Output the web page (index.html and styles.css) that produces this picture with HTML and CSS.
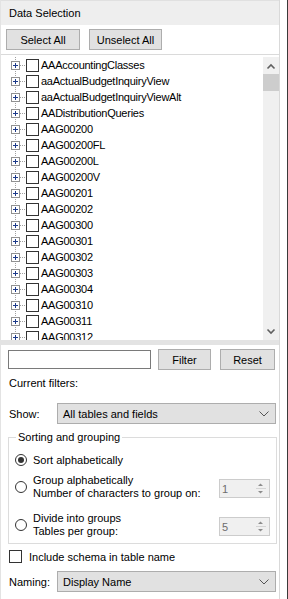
FILE: index.html
```
<!DOCTYPE html>
<html>
<head>
<meta charset="utf-8">
<link rel="stylesheet" href="styles.css">
</head>
<body>
<svg class="defs" width="0" height="0" aria-hidden="true">
  <symbol id="node" viewBox="0 0 38 16">
    <line x1="14.5" y1="0" x2="14.5" y2="16" stroke="#a0a0a0" stroke-dasharray="1 1"/>
    <line x1="19" y1="8.5" x2="25" y2="8.5" stroke="#a0a0a0" stroke-dasharray="1 1"/>
    <rect x="10.5" y="4.5" width="8" height="8" fill="#fff" stroke="#919191"/>
    <path d="M12 8.5h5M14.5 6v5" stroke="#1c3a8a"/>
    <rect x="25.5" y="2.5" width="12" height="12" fill="#fff" stroke="#333"/>
  </symbol>
</svg>
<div class="window">
  <div class="panel">
    <div class="header">Data Selection</div>
    <div class="btnrow">
      <div class="btn sel">Select All</div>
      <div class="btn unsel">Unselect All</div>
    </div>
    <div class="tree">
      <ul class="list">
        <li class="node"><svg class="nico"><use href="#node"/></svg><span>AAAccountingClasses</span></li>
        <li class="node"><svg class="nico"><use href="#node"/></svg><span>aaActualBudgetInquiryView</span></li>
        <li class="node"><svg class="nico"><use href="#node"/></svg><span>aaActualBudgetInquiryViewAlt</span></li>
        <li class="node"><svg class="nico"><use href="#node"/></svg><span>AADistributionQueries</span></li>
        <li class="node"><svg class="nico"><use href="#node"/></svg><span>AAG00200</span></li>
        <li class="node"><svg class="nico"><use href="#node"/></svg><span>AAG00200FL</span></li>
        <li class="node"><svg class="nico"><use href="#node"/></svg><span>AAG00200L</span></li>
        <li class="node"><svg class="nico"><use href="#node"/></svg><span>AAG00200V</span></li>
        <li class="node"><svg class="nico"><use href="#node"/></svg><span>AAG00201</span></li>
        <li class="node"><svg class="nico"><use href="#node"/></svg><span>AAG00202</span></li>
        <li class="node"><svg class="nico"><use href="#node"/></svg><span>AAG00300</span></li>
        <li class="node"><svg class="nico"><use href="#node"/></svg><span>AAG00301</span></li>
        <li class="node"><svg class="nico"><use href="#node"/></svg><span>AAG00302</span></li>
        <li class="node"><svg class="nico"><use href="#node"/></svg><span>AAG00303</span></li>
        <li class="node"><svg class="nico"><use href="#node"/></svg><span>AAG00304</span></li>
        <li class="node"><svg class="nico"><use href="#node"/></svg><span>AAG00310</span></li>
        <li class="node"><svg class="nico"><use href="#node"/></svg><span>AAG00311</span></li>
        <li class="node"><svg class="nico"><use href="#node"/></svg><span>AAG00312</span></li>
      </ul>
      <div class="vscroll">
        <div class="sarrow"><svg width="16" height="17" viewBox="0 0 16 17"><path d="M4.5 11.5L8 8l3.5 3.5" fill="none" stroke="#606060" stroke-width="1.6"/></svg></div>
        <div class="thumb"></div>
        <div class="track"></div>
        <div class="sarrow"><svg width="16" height="17" viewBox="0 0 16 17"><path d="M4.5 6.5L8 10l3.5-3.5" fill="none" stroke="#606060" stroke-width="1.6"/></svg></div>
      </div>
    </div>
    <div class="splitter"></div>
    <div class="options">
      <div class="filter-row">
        <div class="textbox"></div>
        <div class="btn filter">Filter</div>
        <div class="btn reset">Reset</div>
      </div>
      <div class="current">Current filters:</div>
      <div class="field-row show-row">
        <span class="lbl">Show:</span>
        <div class="combo"><span>All tables and fields</span><svg width="10" height="6" viewBox="0 0 10 6"><path d="M0.5 0.5L5 5l4.5-4.5" fill="none" stroke="#555"/></svg></div>
      </div>
      <fieldset class="group">
        <legend>Sorting and grouping</legend>
        <div class="opt opt1">
          <span class="radio checked"></span>
          <div class="otext">Sort alphabetically</div>
        </div>
        <div class="opt opt2">
          <span class="radio"></span>
          <div class="otext">Group alphabetically<br>Number of characters to group on:</div>
          <div class="spin"><span class="val">1</span><span class="spinbtns"><svg width="14" height="16" viewBox="0 0 14 16"><path d="M4 6h5L6.5 3.5z" fill="#8c8c8c"/><path d="M2 8.5h10" stroke="#d4d4d4"/><path d="M4 11h5L6.5 13.5z" fill="#8c8c8c"/></svg></span></div>
        </div>
        <div class="opt opt3">
          <span class="radio"></span>
          <div class="otext">Divide into groups<br>Tables per group:</div>
          <div class="spin"><span class="val">5</span><span class="spinbtns"><svg width="14" height="16" viewBox="0 0 14 16"><path d="M4 6h5L6.5 3.5z" fill="#8c8c8c"/><path d="M2 8.5h10" stroke="#d4d4d4"/><path d="M4 11h5L6.5 13.5z" fill="#8c8c8c"/></svg></span></div>
        </div>
      </fieldset>
      <div class="check-row">
        <span class="checkbox"></span>
        <span>Include schema in table name</span>
      </div>
      <div class="field-row naming-row">
        <span class="lbl">Naming:</span>
        <div class="combo"><span>Display Name</span><svg width="10" height="6" viewBox="0 0 10 6"><path d="M0.5 0.5L5 5l4.5-4.5" fill="none" stroke="#555"/></svg></div>
      </div>
    </div>
  </div>
  <div class="gap"></div>
  <div class="edge"></div>
</div>
</body>
</html>
```
FILE: styles.css
```
* { box-sizing: border-box; }
html, body { margin: 0; padding: 0; }
body {
  width: 288px;
  height: 599px;
  overflow: hidden;
  background: #fff;
  font-family: "Liberation Sans", Arial, sans-serif;
  font-size: 11px;
  color: #000;
}
.defs { position: absolute; width: 0; height: 0; }
.window { display: flex; height: 599px; }
.panel {
  width: 280px;
  border-right: 1px solid #d9d9d9;
  border-left: 1px solid #e3e3e3;
  display: flex;
  flex-direction: column;
}
.gap { width: 7px; }
.edge { width: 1px; background: #3a3a3a; }

.header {
  height: 25px;
  background: #eeeeee;
  padding-left: 8px;
  border-top: 1px solid #e0e0e0;
  line-height: 24px;
}
.btnrow {
  height: 30px;
  display: flex;
  gap: 9px;
  padding: 4px 0 0 5px;
  border-bottom: 1px solid #dadada;
}
.btn {
  height: 21px;
  background: #e1e1e1;
  border: 1px solid #adadad;
  display: flex;
  align-items: center;
  justify-content: center;
}
.sel { width: 74px; }
.unsel { width: 73px; }

.tree {
  height: 285px;
  display: flex;
  overflow: hidden;
}
.list {
  list-style: none;
  margin: 0;
  padding: 2px 0 0 0;
  flex: 1;
  overflow: hidden;
  letter-spacing: -0.25px;
}
.node {
  height: 16px;
  display: flex;
  align-items: center;
  white-space: nowrap;
}
.nico { width: 38px; height: 16px; flex: none; }
.node span { margin-left: 2px; line-height: 16px; }

.vscroll {
  width: 16px;
  margin: 2px 0 0 0;
  background: #f0f0f0;
  display: flex;
  flex-direction: column;
}
.sarrow { height: 17px; }
.sarrow svg { display: block; }
.thumb { height: 17px; background: #cdcdcd; }
.track { flex: 1; }

.splitter { height: 5px; background: #e3e3e3; flex: none; }

.options { display: flex; flex-direction: column; }
.filter-row {
  display: flex;
  align-items: center;
  margin-top: 4px;
  height: 21px;
}
.textbox {
  width: 143px;
  height: 19px;
  margin-left: 7px;
  border: 1px solid #7a7a7a;
  background: #fff;
}
.filter { width: 53px; margin-left: 7px; }
.reset { width: 55px; margin-left: 9px; }

.current {
  margin-top: 7px;
  padding-left: 8px;
  line-height: 13px;
}
.field-row {
  display: flex;
  align-items: center;
  height: 21px;
}
.show-row { margin-top: 13px; }
.lbl { width: 56px; padding-left: 8px; flex: none; }
.combo {
  width: 219px;
  height: 21px;
  background: #e1e1e1;
  border: 1px solid #adadad;
  display: flex;
  align-items: center;
  justify-content: space-between;
  padding: 0 6px 0 5px;
}
.combo svg { display: block; }

.group {
  margin: 7px 2px 0 7px;
  padding: 0 6px 5px 6px;
  border: 1px solid #dcdcdc;
  min-width: 0;
}
.group legend {
  padding: 0 2px;
  margin-left: 1px;
  line-height: 13px;
}
.opt { display: flex; align-items: center; }
.opt1 { margin-top: 9px; height: 14px; }
.opt2 { margin-top: 7px; }
.opt3 { margin-top: 12px; }
.radio {
  width: 12px;
  height: 12px;
  border: 1px solid #333;
  border-radius: 50%;
  flex: none;
  position: relative;
  background: #fff;
}
.radio.checked::after {
  content: "";
  position: absolute;
  left: 2px;
  top: 2px;
  width: 6px;
  height: 6px;
  border-radius: 50%;
  background: #333;
}
.otext { margin-left: 6px; line-height: 13px; white-space: nowrap; }
.spin {
  margin-left: auto;
  margin-top: 3px;
  width: 51px;
  height: 19px;
  border: 1px solid #cccccc;
  background: #f0f0f0;
  display: flex;
  align-items: center;
  justify-content: space-between;
}
.spin .val { color: #6d6d6d; padding-left: 2px; }
.spinbtns { display: block; height: 17px; }
.spinbtns svg { display: block; margin-right: 1px; }

.check-row {
  display: flex;
  align-items: center;
  margin-top: 6px;
  height: 13px;
  padding-left: 8px;
}
.checkbox {
  width: 13px;
  height: 13px;
  border: 1px solid #333;
  background: #fff;
  margin-right: 7px;
  flex: none;
}
.naming-row { margin-top: 8px; }
```
